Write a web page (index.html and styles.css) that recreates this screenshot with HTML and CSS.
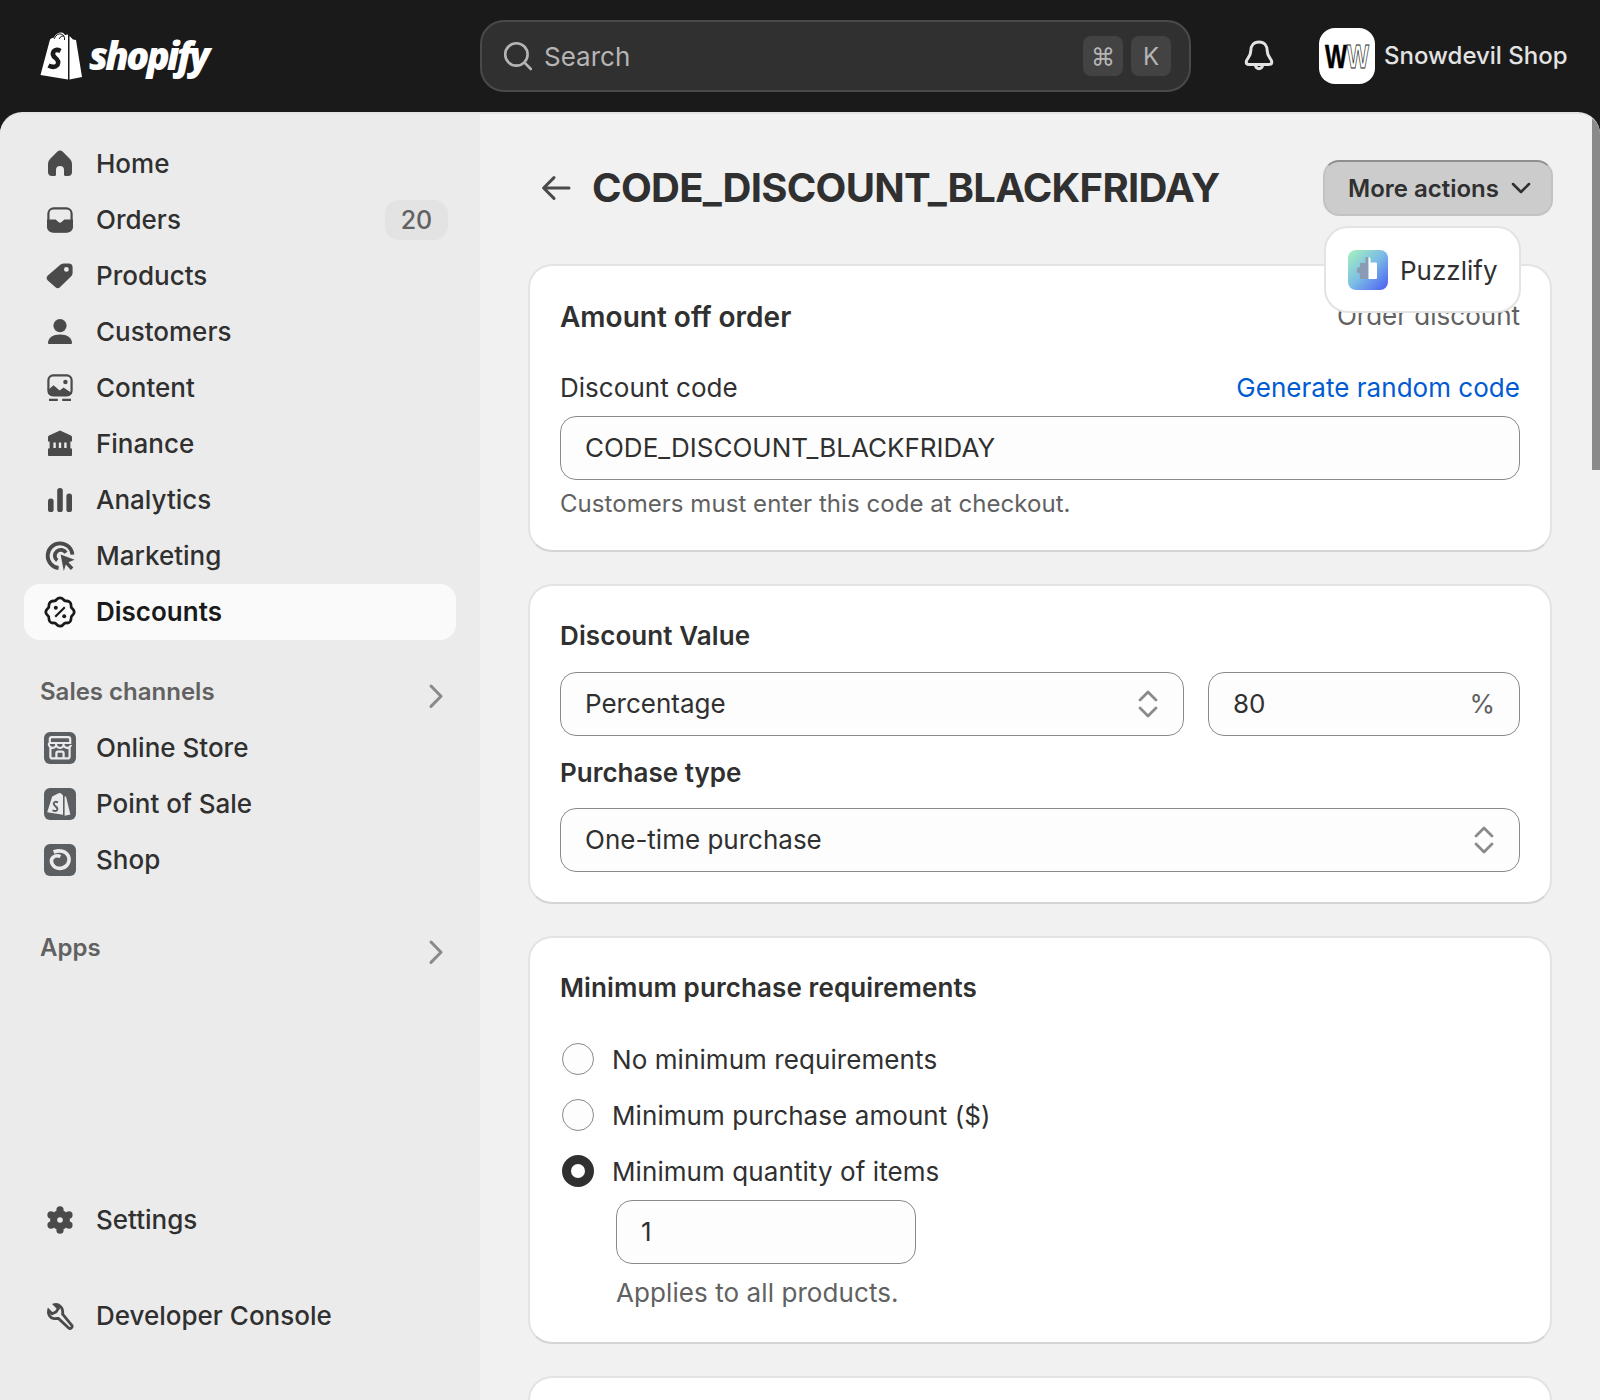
FILE: index.html
```html
<!DOCTYPE html>
<html lang="en">
<head>
<meta charset="utf-8">
<title>Discount</title>
<link rel="stylesheet" href="styles.css">
</head>
<body>
<header class="topbar">
  <div class="brand">
    <svg class="bag" viewBox="0 0 42 48">
      <path class="bag-fill" d="M0.500 43 L10 7.500 Q11 6 14 5.500 Q17 0 22 0.500 Q24 1 25 3 L28 2.500 V47.500 Z"/>
      <path class="bag-fill" d="M29.500 4 L33 7.500 L36 8 L42 45 L29.500 47.500 Z"/>
      <path class="bag-handle" d="M14 7 Q17 1 21 2 Q25 3 24.500 8 M19 7 Q21 3 24 4"/>
      <path class="bag-s" d="M20.500 19 Q16 16.500 13.500 19.500 Q11.500 23 15.500 26 Q19.500 29 17.500 33 Q14 36.500 8.500 33.500"/>
    </svg>
    <span class="wordmark">shopify</span>
  </div>
  <div class="search">
    <svg class="search-icon" viewBox="0 0 20 20"><circle cx="9.200" cy="9.200" r="5.600"/><path d="M13.400 13.400 L16.400 16.500"/></svg>
    <span class="search-text">Search</span>
    <span class="key">⌘</span>
    <span class="key">K</span>
  </div>
  <svg class="bell" viewBox="0 0 20 20"><path d="M10 3 C7.200 3 5.900 5 5.900 7.400 C5.900 10.600 3.600 11.400 3.600 13 C3.600 13.800 4.200 14.200 5 14.200 H15 C15.800 14.200 16.400 13.800 16.400 13 C16.400 11.400 14.100 10.600 14.100 7.400 C14.100 5 12.800 3 10 3 Z"/><path d="M8.200 14.400 C8.200 17 11.800 17 11.800 14.400"/></svg>
  <div class="shop">
    <div class="avatar">
      <svg viewBox="0 0 56 56"><text class="logo-mark" x="6" y="40" textLength="44" lengthAdjust="spacingAndGlyphs"><tspan class="logo-w">W</tspan><tspan class="logo-w-line">W</tspan></text></svg>
    </div>
    <span class="shop-name">Snowdevil Shop</span>
  </div>
</header>

<div class="shell">
  <aside class="sidebar">
    <nav class="nav">
      <a class="nav-row"><svg class="ico" viewBox="0 0 20 20"><path d="M8.600 3.900a2 2 0 0 1 2.800 0l3.600 3.600a3.400 3.400 0 0 1 1 2.400V14a2 2 0 0 1-2 2h-1.200a.8.8 0 0 1-.8-.8V13a2 2 0 0 0-4 0v2.200a.8.8 0 0 1-.8.8H6a2 2 0 0 1-2-2V9.900a3.400 3.400 0 0 1 1-2.400z"/></svg><span>Home</span></a>
      <a class="nav-row"><svg class="ico" viewBox="0 0 20 20"><rect class="ico-line" x="4.200" y="4.200" width="11.600" height="11.600" rx="2.600"/><path d="M3.500 9.700h4.300l1.300 1.200a1.300 1.300 0 0 0 1.800 0l1.300-1.200h4.300v3.800a2.600 2.600 0 0 1-2.600 2.600H6.100a2.600 2.600 0 0 1-2.600-2.600z"/></svg><span>Orders</span><span class="badge">20</span></a>
      <a class="nav-row"><svg class="ico" viewBox="0 0 20 20"><path fill-rule="evenodd" d="M11.800 3.700h2.500a2 2 0 0 1 2 2v2.800a2.600 2.600 0 0 1-.8 1.800l-5.400 5.200a1.800 1.800 0 0 1-2.500 0L3.900 12.200a1.800 1.800 0 0 1 0-2.500l6.100-5.200a2.600 2.600 0 0 1 1.800-.8zM13.200 5.500a1.200 1.200 0 1 0 0 2.400 1.200 1.200 0 0 0 0-2.400z"/></svg><span>Products</span></a>
      <a class="nav-row"><svg class="ico" viewBox="0 0 20 20"><circle cx="10" cy="6.800" r="3.300"/><path d="M4 15.600C4 13 6.500 11.300 10 11.300s6 1.700 6 4.300c0 .3-.2.400-.4.400H4.400c-.2 0-.4-.1-.4-.4z"/></svg><span>Customers</span></a>
      <a class="nav-row"><svg class="ico" viewBox="0 0 20 20"><rect class="ico-line" x="4.200" y="3.700" width="11.600" height="10" rx="2.400"/><path d="M4 11l2.800-2.400 3 2.600 2-1.400L16 12.600a2.400 2.400 0 0 1-2.200 1.400H6.200A2.400 2.400 0 0 1 4 11.600z"/><circle cx="12.700" cy="7" r="1.100"/><path d="M4.500 15.400h4.400v1.100H4.500zM11.100 15.400h4.400v1.100h-4.400z"/></svg><span>Content</span></a>
      <a class="nav-row"><svg class="ico" viewBox="0 0 20 20"><path fill-rule="evenodd" d="M10 3.300L15.500 5.700a.9.900 0 0 1 .5.800V8.700h-.8v3.500h.8v3.400a.4.400 0 0 1-.4.400H4.400a.4.400 0 0 1-.4-.4V12.200h.8V8.700H4V6.500a.9.900 0 0 1 .5-.8zM6.700 9.200v2.800h1.200V9.200zM9.400 9.200v2.800h1.200V9.200zM12.100 9.200v2.800h1.200V9.200z"/></svg><span>Finance</span></a>
      <a class="nav-row"><svg class="ico" viewBox="0 0 20 20"><rect x="4" y="9.300" width="2.800" height="6.700" rx="1.300"/><rect x="8.600" y="4" width="2.800" height="12" rx="1.300"/><rect x="13.200" y="6.700" width="2.800" height="9.300" rx="1.300"/></svg><span>Analytics</span></a>
      <a class="nav-row"><svg class="ico" viewBox="0 0 20 20"><path class="ico-line heavy" d="M9.300 16A6.200 6.200 0 1 1 16.200 9.300"/><path class="ico-line heavy" d="M8.600 12.300A3 3 0 1 1 13 8.400"/><path d="M10.300 9.300l7 2.600-3.100 1.200 2.500 2.700-1.300 1.200-2.500-2.700-1 3.200z"/></svg><span>Marketing</span></a>
      <a class="nav-row is-active"><svg class="ico ico-dark" viewBox="0 0 20 20"><path class="ico-line thick" d="M8.400 3.700a2 2 0 0 1 3.200 0 2 2 0 0 0 1.900.8 2 2 0 0 1 2 2 2 2 0 0 0 .8 1.900 2 2 0 0 1 0 3.200 2 2 0 0 0-.8 1.900 2 2 0 0 1-2 2 2 2 0 0 0-1.900.8 2 2 0 0 1-3.200 0 2 2 0 0 0-1.900-.8 2 2 0 0 1-2-2 2 2 0 0 0-.8-1.900 2 2 0 0 1 0-3.200 2 2 0 0 0 .8-1.900 2 2 0 0 1 2-2 2 2 0 0 0 1.900-.8z"/><path class="ico-line" d="M7.600 12.400l4.800-4.800"/><circle cx="7.900" cy="7.900" r="1"/><circle cx="12.100" cy="12.100" r="1"/></svg><span>Discounts</span></a>
    </nav>

    <div class="nav-head"><span>Sales channels</span><svg class="chev" viewBox="0 0 20 20"><path d="M7.500 5l5 5.100-5 5.100"/></svg></div>
    <nav class="nav">
      <a class="nav-row tile"><svg class="ico" viewBox="0 0 20 20"><rect x="2" y="2" width="16" height="16" rx="3"/><path class="tile-line" d="M4.900 8V5.600a1 1 0 0 1 1-1h8.200a1 1 0 0 1 1 1V8M4.400 7.500h11.200M5.200 9.800v4.400a1 1 0 0 0 1 1h7.600a1 1 0 0 0 1-1V9.800M8.200 15v-2.400a.8.8 0 0 1 .8-.8h2a.8.8 0 0 1 .8.800V15M4.500 7.500a1.900 1.900 0 0 0 3.700 1M8.100 7.500a1.900 1.900 0 0 0 3.800 1M11.800 7.500a1.900 1.900 0 0 0 3.700 1"/></svg><span>Online Store</span></a>
      <a class="nav-row tile"><svg class="ico" viewBox="0 0 20 20"><rect x="2" y="2" width="16" height="16" rx="3"/><path class="tile-fill" d="M6.100 6.300L9 4.700q1-.6 1.700.2l.8.8v9.700l-7.900-1.300z"/><path class="tile-fill" d="M12.300 6.300h.7l2.200 9-2.900.6z"/><path class="tile-s" d="M9 9.200q-1.800-.8-2.100.5-.2.800.9 1.500 1.100.8.800 1.700-.4 1-2.400.3"/></svg><span>Point of Sale</span></a>
      <a class="nav-row tile"><svg class="ico" viewBox="0 0 20 20"><rect x="2" y="2" width="16" height="16" rx="3"/><path class="tile-thick" d="M6.800 6Q10 4.800 12.400 6.100 14.800 7.600 14.500 10.300 14 13.400 10.700 14.100 7.700 14.500 6.300 12.300 5 10 6.500 8.700 8.200 7.300 10.200 8.300"/><circle class="tile-dot" cx="10" cy="10.500" r="1.300"/></svg><span>Shop</span></a>
    </nav>

    <div class="nav-head nav-head-apps"><span>Apps</span><svg class="chev" viewBox="0 0 20 20"><path d="M7.500 5l5 5.100-5 5.100"/></svg></div>

    <div class="sidebar-foot">
      <a class="nav-row"><svg class="ico" viewBox="0 0 20 20"><circle cx="10" cy="10" r="5"/><circle cx="10" cy="4.900" r="1.800"/><circle cx="10" cy="15.100" r="1.800"/><circle cx="5.500" cy="7.450" r="1.800"/><circle cx="14.500" cy="7.450" r="1.800"/><circle cx="5.500" cy="12.550" r="1.800"/><circle cx="14.500" cy="12.550" r="1.800"/><circle class="gear-hole" cx="10" cy="10" r="1.400"/></svg><span>Settings</span></a>
      <a class="nav-row"><svg class="ico" viewBox="0 0 20 20"><path class="ico-line thick" d="M7.300 4.300L9.200 6.200 8 8 6 8.900 4.300 7.100C3.800 9 4.800 11 7 11.300 7.800 11.400 8.600 11.200 9.200 11.200L14.200 15.900C15.300 16.900 16.700 15.500 15.700 14.400L11.300 9.100C11.500 7.700 11.200 6 10 5 9 4.100 8.200 4 7.300 4.300Z"/></svg><span>Developer Console</span></a>
    </div>
  </aside>

  <main class="main">
    <div class="page-head">
      <svg class="back" viewBox="0 0 20 20"><path d="M16.500 10H3.800M9 4.800L3.800 10 9 15.200"/></svg>
      <h1 class="title">CODE_DISCOUNT_BLACKFRIDAY</h1>
      <div class="actions">
        <button class="more"><span>More actions</span><svg class="more-chev" viewBox="0 0 20 20"><path d="M5 7.500l5 5 5-5"/></svg></button>
        <div class="menu">
          <span class="puzzle"><svg viewBox="0 0 40 40"><path class="puzzle-grey" d="M18 7h2.500v22H12v-5.500h-.5a3.300 3.300 0 0 1 0-6.500h.5v-4h5.500V10a3 3 0 0 1 .5-3z"/><path class="puzzle-white" d="M20.500 7a3 3 0 0 1 2 3.500v2H28a1 1 0 0 1 1 1V28a1 1 0 0 1-1 1h-7.500z"/></svg></span>
          <span class="menu-text">Puzzlify</span>
        </div>
      </div>
    </div>

    <section class="card card-code">
      <div class="card-top"><h2 class="h-lg">Amount off order</h2><span class="muted-lg">Order discount</span></div>
      <div class="label-row"><label>Discount code</label><a class="link">Generate random code</a></div>
      <div class="field">CODE_DISCOUNT_BLACKFRIDAY</div>
      <p class="help">Customers must enter this code at checkout.</p>
    </section>

    <section class="card">
      <h2 class="h-md">Discount Value</h2>
      <div class="value-row">
        <div class="field field-select grow"><span>Percentage</span><svg class="updown" viewBox="0 0 20 20"><path d="M6 8l4-4 4 4M6 12l4 4 4-4"/></svg></div>
        <div class="field field-select amount"><span>80</span><span class="unit">%</span></div>
      </div>
      <h3 class="h-sub">Purchase type</h3>
      <div class="field field-select"><span>One-time purchase</span><svg class="updown" viewBox="0 0 20 20"><path d="M6 8l4-4 4 4M6 12l4 4 4-4"/></svg></div>
    </section>

    <section class="card card-min">
      <h2 class="h-md">Minimum purchase requirements</h2>
      <div class="radios">
        <div class="radio-row"><span class="radio"></span><span>No minimum requirements</span></div>
        <div class="radio-row"><span class="radio"></span><span>Minimum purchase amount ($)</span></div>
        <div class="radio-row"><span class="radio radio-on"></span><span>Minimum quantity of items</span></div>
      </div>
      <div class="sub-block">
        <div class="field qty">1</div>
        <p class="help help-lg">Applies to all products.</p>
      </div>
    </section>

    <section class="card card-next"></section>
  </main>
  <div class="scroll-thumb"></div>
</div>
</body>
</html>
```
FILE: styles.css
```css
* { box-sizing: border-box; }
html, body { margin: 0; height: 1400px; overflow: hidden; }
body { background: #1a1a1a; font-family: Inter, "Liberation Sans", sans-serif; color: #303030; font-size: 26px; }
h1, h2, h3, p { margin: 0; }
a { display: block; }

.topbar { height: 112px; display: flex; align-items: center; padding-left: 40px; color: #e3e3e3; }
.brand { width: 440px; display: flex; align-items: center; gap: 7px; }
.bag { width: 42px; height: 48px; }
.bag-fill { fill: #fff; }
.bag-handle { fill: none; stroke: #1a1a1a; stroke-width: 1; }
.bag-s { fill: none; stroke: #1a1a1a; stroke-width: 4.500; }
.wordmark { font-family: "Open Sans", sans-serif; font-weight: 800; font-style: italic; font-size: 38px; letter-spacing: -2.700px; color: #fff; line-height: 46px; margin-bottom: 2px; }
.search { width: 711px; height: 72px; display: flex; align-items: center; gap: 8px; padding: 0 18px 0 16px; background: #303030; border: 2px solid #4a4a4a; border-radius: 24px; }
.search-icon { width: 40px; height: 40px; fill: none; stroke: #b5b5b5; stroke-width: 1.300; stroke-linecap: round; }
.search-text { flex: 1; font-size: 26px; color: #b5b5b5; margin-left: -2px; }
.key { width: 40px; height: 40px; border-radius: 8px; background: #434343; color: #b5b5b5; font-size: 24px; display: flex; align-items: center; justify-content: center; }
.bell { width: 40px; height: 40px; margin-left: 48px; fill: none; stroke: #e3e3e3; stroke-width: 1.500; stroke-linejoin: round; }
.shop { margin-left: 40px; display: flex; align-items: center; gap: 9px; white-space: nowrap; }
.avatar { width: 56px; height: 56px; border-radius: 16px; background: #fff; }
.avatar svg { width: 56px; height: 56px; display: block; }
.logo-mark { font-family: "Liberation Sans", sans-serif; font-size: 34px; font-weight: 700; }
.logo-w { fill: #000; stroke: #000; stroke-width: .600; }
.logo-w-line { fill: #fff; stroke: #222; stroke-width: .900; }
.shop-name { font-size: 24px; font-weight: 500; color: #e3e3e3; padding-bottom: 2px; }

.shell { position: relative; height: 1288px; display: flex; border-radius: 22px 22px 0 0; overflow: hidden; background: #f1f1f1; border-top: 2px solid #e3e3e3; }
.sidebar { width: 480px; flex: none; background: #ebebeb; padding: 22px 24px 56px; display: flex; flex-direction: column; }
.nav { display: flex; flex-direction: column; }
.nav-row { height: 56px; display: flex; align-items: center; gap: 16px; padding: 0 8px 0 16px; border-radius: 16px; font-weight: 500; color: #303030; }
.nav-row > span:first-of-type { flex: 1; padding-bottom: 2px; }
.nav-row.is-active { background: #fafafa; font-weight: 600; color: #1a1a1a; }
.ico { width: 40px; height: 40px; flex: none; fill: #4a4a4a; }
.ico-dark { fill: #1a1a1a; }
.ico-line { fill: none; stroke: #4a4a4a; stroke-width: 1.100; }
.ico-line.thick { stroke-width: 1.400; }
.ico-line.heavy { stroke-width: 1.900; }
.ico-dark .ico-line { stroke: #1a1a1a; }
.gear-hole { fill: #ebebeb; }
.badge { height: 40px; width: 63px; flex: none !important; border-radius: 14px; background: #e3e3e3; color: #616161; font-size: 25px; display: flex; align-items: center; justify-content: center; }
.nav-head { height: 56px; margin-top: 24px; padding: 0 16px; display: flex; align-items: center; justify-content: space-between; font-size: 24px; font-weight: 600; color: #616161; }
.nav-head span { padding-bottom: 2px; }
.nav-head-apps { margin-top: 32px; }
.chev { width: 40px; height: 40px; margin: 8px -16px 0 0; fill: none; stroke: #8a8a8a; stroke-width: 1.500; stroke-linecap: round; stroke-linejoin: round; }
.tile .ico { fill: #5c5f62; }
.tile-line { fill: none; stroke: #ebebeb; stroke-width: 1.100; }
.tile-fill { fill: #ebebeb; }
.tile-s { fill: none; stroke: #5c5f62; stroke-width: 1; }
.tile-thick { fill: none; stroke: #ebebeb; stroke-width: 1.800; }
.tile-dot { fill: #5c5f62; }
.sidebar-foot { margin-top: auto; display: flex; flex-direction: column; gap: 40px; }

.main { flex: 1; padding: 46px 48px 0 48px; min-width: 0; }
.page-head { height: 56px; display: flex; align-items: center; margin-bottom: 48px; position: relative; }
.back { width: 40px; height: 40px; margin: 0 16px 0 8px; fill: none; stroke: #4a4a4a; stroke-width: 1.500; stroke-linecap: round; stroke-linejoin: round; }
.title { font-size: 40px; font-weight: 700; letter-spacing: -.7px; flex: 1; line-height: 56px; white-space: nowrap; }
.actions { position: relative; margin-right: -1px; }
.more { width: 230px; height: 56px; display: flex; align-items: center; justify-content: space-between; padding: 0 14px 0 23px; font: 600 24px Inter, sans-serif; color: #303030; background: #cccccc; border: 2px solid #c2c2c2; border-top-color: #8f8f8f; border-radius: 16px; white-space: nowrap; }
.more-chev { width: 32px; height: 32px; fill: none; stroke: #303030; stroke-width: 1.600; stroke-linecap: round; stroke-linejoin: round; }
.menu { position: absolute; left: 1px; top: 66px; width: 197px; height: 87px; background: #fff; border: 2px solid #e3e3e3; border-radius: 24px; display: flex; align-items: center; gap: 12px; padding-left: 22px; z-index: 2; }
.puzzle { width: 40px; height: 40px; border-radius: 8px; background: linear-gradient(135deg, #a6f3bd 0%, #7bbbe6 50%, #4a5cf3 100%); flex: none; }
.puzzle svg { width: 40px; height: 40px; display: block; }
.puzzle-grey { fill: #8b9bb4; }
.puzzle-white { fill: #fff; }
.menu-text { font-size: 26px; font-weight: 400; padding-top: 2px; }

.card { background: #fff; border: 2px solid #e3e3e3; border-bottom-color: #d4d4d4; border-radius: 24px; padding: 30px; margin-bottom: 32px; }
.card-code { padding-bottom: 28px; }
.card-top { display: flex; justify-content: space-between; align-items: center; height: 36px; margin-top: 2px; }
.h-lg { font-size: 28px; font-weight: 600; line-height: 36px; padding-top: 1px; }
.h-md { font-size: 26px; font-weight: 600; line-height: 36px; margin-top: 2px; margin-bottom: 8px; letter-spacing: .1px; }
.h-sub { font-size: 26px; font-weight: 600; line-height: 36px; margin: 19px 0 17px; }
.muted-lg { font-size: 26px; color: #616161; padding-bottom: 1px; }
.label-row { display: flex; justify-content: space-between; margin-top: 36px; line-height: 36px; font-size: 26px; letter-spacing: .03px; }
.link { color: #005bd3; }
.field { height: 64px; display: flex; align-items: center; padding: 0 24px 2px; border: 1.500px solid #8a8a8a; border-radius: 16px; background: #fdfdfd; font-size: 26px; margin-top: 10px; }
.help { font-size: 24px; color: #616161; line-height: 36px; margin-top: 6px; letter-spacing: .05px; }
.value-row { display: flex; gap: 24px; }
.field-select { justify-content: space-between; }
.grow { flex: 1; }
.amount { width: 312px; flex: none; }
.unit { color: #616161; }
.updown { width: 40px; height: 40px; margin: 2px -9px 0 0; fill: none; stroke: #8a8a8a; stroke-width: 1.400; stroke-linecap: round; stroke-linejoin: round; }
.card-min { padding-bottom: 31px; }
.radios { margin-top: 25px; display: flex; flex-direction: column; }
.radio-row { height: 56px; display: flex; align-items: center; gap: 18px; font-size: 26px; letter-spacing: .08px; }
.radio { width: 32px; height: 32px; margin-left: 2px; border-radius: 50%; border: 1.500px solid #8a8a8a; background: #fdfdfd; flex: none; }
.radio-on { border: 9px solid #303030; background: #fff; }
.sub-block { margin-left: 56px; }
.qty { width: 300px; margin-top: 1px; }
.help-lg { font-size: 26px; margin-top: 11px; letter-spacing: .08px; }
.card-next { height: 200px; }
.scroll-thumb { position: absolute; top: 0; right: 0; width: 8px; height: 356px; background: #8a8a8a; }
```
